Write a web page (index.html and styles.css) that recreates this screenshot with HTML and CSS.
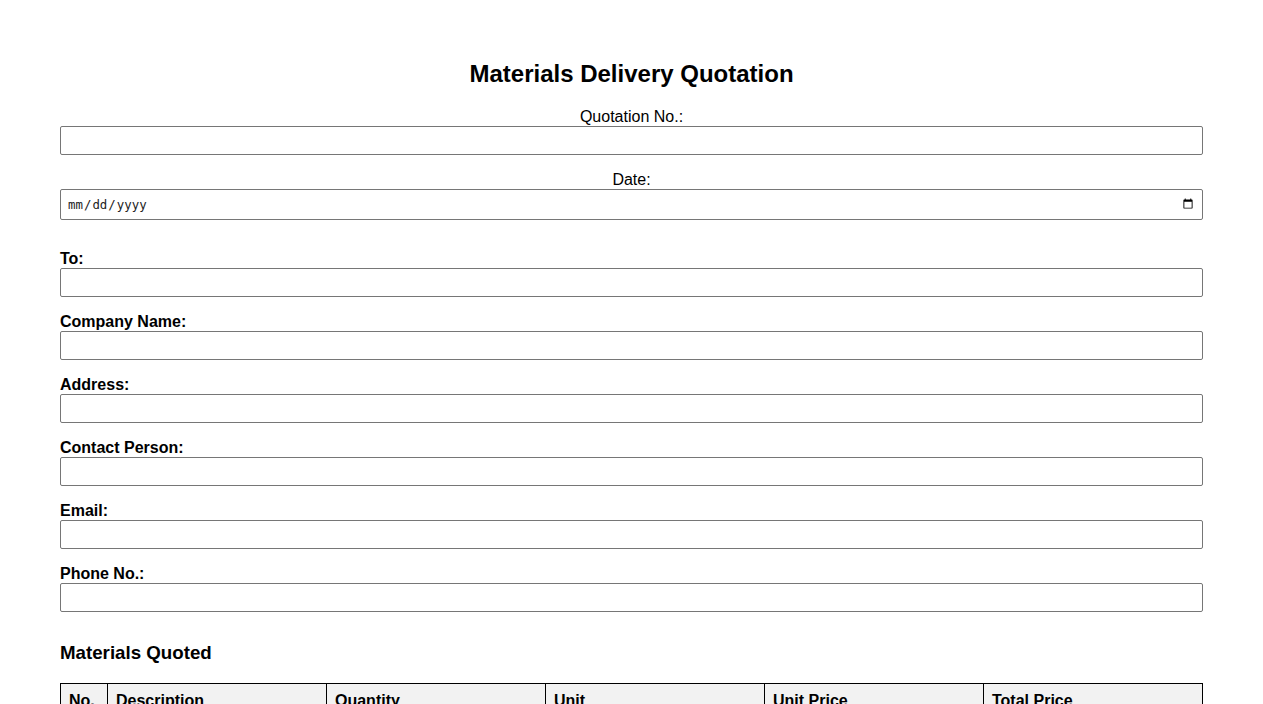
FILE: index.html
```html
<!DOCTYPE html>
<html lang="en">
<head>
<meta charset="utf-8">
<title>Materials Delivery Quotation</title>
<link rel="stylesheet" href="styles.css">
</head>
<body>
<div class="page">
  <h1 class="title">Materials Delivery Quotation</h1>
  <div class="meta">
    <label class="meta-label" for="qno">Quotation No.:</label>
    <input class="field" id="qno" type="text">
    <label class="meta-label" for="qdate">Date:</label>
    <input class="field field-date" id="qdate" type="date">
  </div>
  <div class="client">
    <label class="label" for="to">To:</label>
    <input class="field" id="to" type="text">
    <label class="label" for="company">Company Name:</label>
    <input class="field" id="company" type="text">
    <label class="label" for="address">Address:</label>
    <input class="field" id="address" type="text">
    <label class="label" for="contact">Contact Person:</label>
    <input class="field" id="contact" type="text">
    <label class="label" for="email">Email:</label>
    <input class="field" id="email" type="text">
    <label class="label" for="phone">Phone No.:</label>
    <input class="field" id="phone" type="text">
  </div>
  <h2 class="section-title">Materials Quoted</h2>
  <table class="items">
    <thead>
      <tr>
        <th class="col-no">No.</th>
        <th>Description</th>
        <th>Quantity</th>
        <th>Unit</th>
        <th>Unit Price</th>
        <th>Total Price</th>
      </tr>
    </thead>
    <tbody>
      <tr><td>1</td><td></td><td></td><td></td><td></td><td></td></tr>
      <tr><td>2</td><td></td><td></td><td></td><td></td><td></td></tr>
      <tr><td>3</td><td></td><td></td><td></td><td></td><td></td></tr>
    </tbody>
  </table>
</div>
</body>
</html>
```
FILE: styles.css
```css
html, body {
  margin: 0;
  padding: 0;
  background: #ffffff;
}
body {
  font-family: "Liberation Sans", Arial, sans-serif;
  color: #000000;
  font-size: 16px;
}
.page {
  padding: 60px 60px 40px;
}
.title {
  margin: 0 0 20px;
  font-size: 24px;
  line-height: 28px;
  font-weight: bold;
  text-align: center;
}
.meta {
  display: flex;
  flex-direction: column;
}
.meta-label {
  display: block;
  text-align: center;
  line-height: 18px;
}
.label {
  display: block;
  font-weight: bold;
  line-height: 18px;
}
.field {
  display: block;
  box-sizing: border-box;
  width: 100%;
  height: 29px;
  margin: 0 0 16px;
  border: 1px solid #767676;
  border-radius: 2px;
  background: #ffffff;
}
.field-date {
  height: 31px;
  padding: 0 6px;
  margin-bottom: 30px;
  font-size: 12.4px;
  color: #222222;
}
.client {
  display: flex;
  flex-direction: column;
}
.section-title {
  margin: 13px 0 19px;
  font-size: 18.72px;
  line-height: 23px;
  font-weight: bold;
}
.items {
  width: 100%;
  border-collapse: collapse;
  table-layout: fixed;
}
.items th,
.items td {
  border: 1px solid #000000;
  padding: 8px;
  text-align: left;
  height: 18px;
}
.items th {
  background: #f2f2f2;
  font-weight: bold;
}
.items .col-no {
  width: 30px;
}
```
